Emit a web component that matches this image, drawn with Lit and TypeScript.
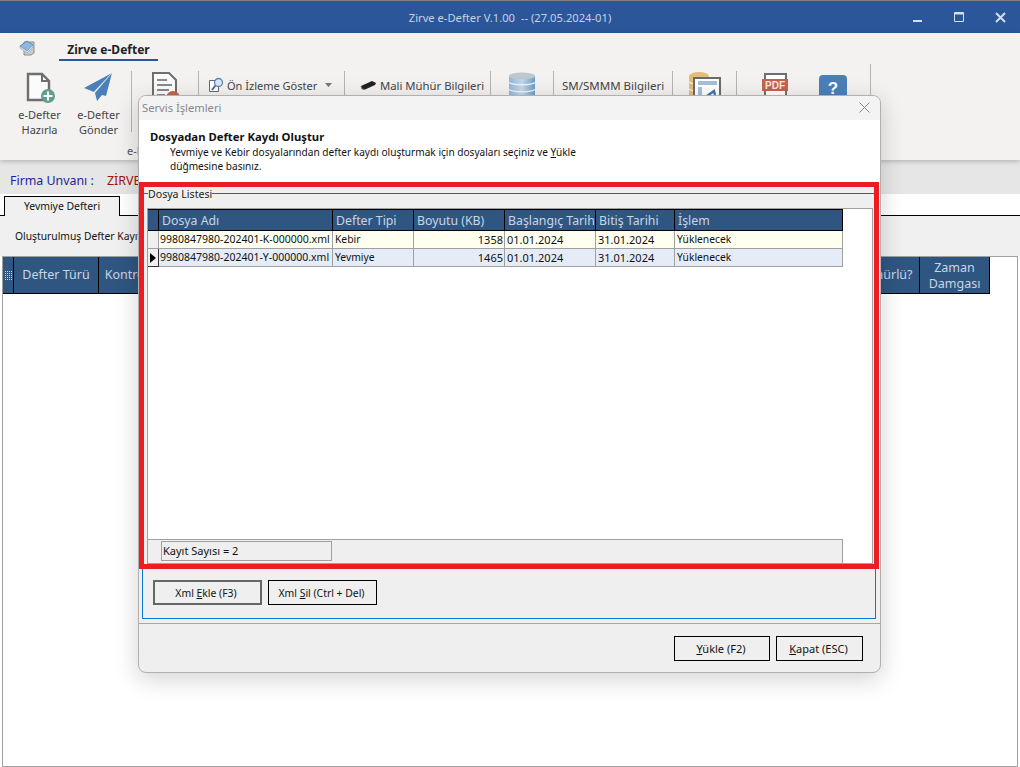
import { LitElement, html, css, svg } from "lit";
import { customElement } from "lit/decorators.js";

const iconNew = svg`<svg class="ic" width="32" height="34" viewBox="0 0 32 34"><path d="M4 3h14l7 7v19H4z" fill="#fbfbfb" stroke="#6e6e6e" stroke-width="2.4"/><path d="M18 3v7h7" fill="none" stroke="#6e6e6e" stroke-width="2"/><circle cx="24" cy="25" r="7" fill="#5f9e8e"/><path d="M24 20.500v9M19.500 25h9" stroke="#fff" stroke-width="2.2"/></svg>`;
const iconSend = svg`<svg class="ic" width="32" height="34" viewBox="0 0 32 34"><path d="M29 2 1 17l10 4z" fill="#4a80ba"/><path d="M29 2 12 22l2 8 5-6 4 1z" fill="#4a80ba"/><path d="M29 2 11 21" stroke="#f3f2f1" stroke-width=".6"/></svg>`;
const iconDocX = svg`<svg class="ic" width="32" height="34" viewBox="0 0 32 34"><path d="M4 2h16l7 7v24H4z" fill="#fbfbfb" stroke="#6e6e6e" stroke-width="2"/><path d="M8 9h10M8 14h15M8 19h12M8 24h8" stroke="#8a8a8a" stroke-width="2"/><circle cx="24" cy="27" r="7" fill="#c8614b"/></svg>`;
const iconZoom = svg`<svg width="16" height="16" viewBox="0 0 16 16"><path d="M1.500 3.500h9v11h-9z" fill="#fff" stroke="#666"/><circle cx="10.500" cy="5.500" r="4" fill="#dbe8f4" stroke="#5a86b0" stroke-width="1.3"/><path d="M7.500 8.500 4 13" stroke="#4a6f94" stroke-width="2"/></svg>`;
const iconUsb = svg`<svg width="17" height="10" viewBox="0 0 17 10"><path d="M1 6 12 1l4 2-1 2L5 9.500 2 9z" fill="#222"/><path d="M1 6 2 9l3 .5" fill="none" stroke="#777"/></svg>`;
const iconDb = svg`<svg class="ic" width="32" height="34" viewBox="0 0 32 34"><defs><linearGradient id="dbg" x1="0" x2="1" y1="0" y2="0"><stop offset="0" stop-color="#8fb6d6"/><stop offset=".5" stop-color="#c3d9ea"/><stop offset="1" stop-color="#6c9cc6"/></linearGradient></defs><path d="M3 5v21c0 2 26 2 26 0V5z" fill="url(#dbg)"/><ellipse cx="16" cy="5" rx="13" ry="3.600" fill="#bcc8d0"/><path d="M3 11.500c4 3 22 3 26 0M3 18.500c4 3 22 3 26 0" stroke="#eef4f9" stroke-width="1.400" fill="none"/><ellipse cx="16" cy="27" rx="15" ry="2.500" fill="#999" opacity=".6"/></svg>`;
const iconChart = svg`<svg class="ic" width="36" height="34" viewBox="0 0 36 34"><ellipse cx="12" cy="5" rx="10" ry="4" fill="#e4bd77"/><path d="M2 5v20c0 2 20 2 20 0V5z" fill="#e4bd77"/><path d="M2 11c3 3 17 3 20 0M2 18c3 3 17 3 20 0" stroke="#f3f2f1" stroke-width="1.400" fill="none"/><path d="M7 7h26v27H7z" fill="#fff" stroke="#6b6b6b" stroke-width="2"/><path d="M11 10h19v4H11zM11 16h4v13h-4z" fill="#a5c0db"/><path d="M20 25l7-5 1 4" stroke="#3f76b0" stroke-width="2.400" fill="none"/></svg>`;
const iconPdf = svg`<svg class="ic" width="28" height="32" viewBox="0 0 28 32"><path d="M3 1h21v30H3z" fill="#fff" stroke="#6e6e6e" stroke-width="2"/><rect x="0" y="6" width="26" height="12" fill="#c8614b"/><text x="13" y="15.500" text-anchor="middle" font-size="10" font-weight="700" fill="#f6e7e2" font-family="Liberation Sans, sans-serif">PDF</text></svg>`;
const iconHelp = svg`<svg class="ic help" width="28" height="28" viewBox="0 0 28 28"><rect width="28" height="28" rx="4" fill="#4a80ba"/><text x="14" y="19" text-anchor="middle" font-size="17" font-weight="700" fill="#fff" font-family="Liberation Sans, sans-serif">?</text></svg>`;

const COLS = [
  { label: "Dosya Adı", width: 174, kind: "file" },
  { label: "Defter Tipi", width: 81, kind: "text" },
  { label: "Boyutu (KB)", width: 91, kind: "num" },
  { label: "Başlangıç Tarihi", width: 91, kind: "date" },
  { label: "Bitiş Tarihi", width: 79, kind: "date" },
  { label: "İşlem", width: 168, kind: "text" },
];
const ROWS = [
  { cells: ["9980847980-202401-K-000000.xml", "Kebir", "1358", "01.01.2024", "31.01.2024", "Yüklenecek"], alt: false, cur: false },
  { cells: ["9980847980-202401-Y-000000.xml", "Yevmiye", "1465", "01.01.2024", "31.01.2024", "Yüklenecek"], alt: true, cur: true },
];

@customElement("app-root")
export class AppRoot extends LitElement {
  static styles = css`
    :host { display: block; width: 1020px; height: 767px; position: relative; overflow: hidden; background: #fff;
      font-family: "Noto Sans", "Open Sans", sans-serif; font-size: 11px; color: #111; }
    .page { display: flex; flex-direction: column; height: 767px; }
    .titlebar { height: 32px; flex: none; border-top: 1px solid #808080; background: #2b579a; color: #c5d2e6; font-size: 11.200px;
      display: flex; align-items: center; justify-content: center; white-space: pre; position: relative; }
    .winbtns { position: absolute; right: 0; top: 0; height: 32px; display: flex; }
    .winbtn { width: 41px; height: 32px; display: flex; align-items: center; justify-content: center; }
    .winbtn.sh { padding-left: 2px; box-sizing: border-box; }
    .ribbon { height: 127px; flex: none; background: #f3f2f1; box-shadow: 0 1px 5px rgba(0,0,0,.25); position: relative; }
    .rtabs { height: 31px; display: flex; align-items: flex-start; padding-left: 19px; }
    .logo { margin-top: 6px; }
    .rtab { margin-left: 23px; width: 99px; padding-top: 6px; box-sizing: border-box; height: 28px; border-bottom: 2px solid #2b579a; font-weight: 700; font-size: 12px; color: #222;
      display: flex; align-items: center; justify-content: center; }
    .rcells { display: flex; align-items: flex-start; height: 68px; }
    .cell { height: 61px; margin-top: 7px; border-right: 1px solid #b4b4b4; box-sizing: border-box; flex: none; display: flex; color: #444; font-size: 11.300px; }
    .cell.tall { height: 68px; margin-top: 0; padding-top: 9px; }
    .ic { flex: none; }
    .btn { display: flex; flex-direction: column; align-items: center; text-align: center; line-height: 15px; font-size: 11px; }
    .btn .ic { display: block; margin-bottom: 2px; }
    .btn span { flex: none; }
    .inline { display: flex; align-items: center; gap: 3px; height: 14px; margin-top: 7px; white-space: nowrap; }
    .c1 { width: 132px; padding-left: 10px; }
    .c1 .btn { width: 59px; }
    .c2 { width: 67px; justify-content: center; }
    .c3 { width: 146px; padding-left: 9px; }
    .c3 span { font-size: 11px; }
    .c4 { width: 146px; padding-left: 15px; }
    .c5 { width: 63px; justify-content: center; }
    .c6 { width: 119px; padding-left: 8px; }
    .c6 span { font-size: 11.500px; }
    .c7 { width: 64px; justify-content: center; }
    .c8 { width: 134px; padding-left: 25px; gap: 29px; }
    .help { margin-top: 2px; }
    .caret { margin-left: 5px; }
    .rgroup { padding-left: 127px; font-size: 11px; color: #555; margin-top: 11px; }
    .firm { height: 34px; flex: none; background: #e6e6e6; box-sizing: border-box; padding: 7px 0 0 10px; display: flex; align-items: center; font-size: 12.400px; }
    .firm .l { color: #1f1fa0; width: 97px; }
    .firm .v { color: #a01010; }
    .tabstrip { height: 22px; flex: none; display: flex; align-items: flex-end; }
    .tabstrip .gap { width: 4px; height: 1px; background: #000; }
    .tabstrip .rest { flex: 1; height: 1px; background: #000; }
    .tab { width: 116px; height: 20px; box-sizing: border-box; border: 1px solid #000; border-bottom: 0; background: #f0f0f0; text-align: center; line-height: 19px; color: #111; font-size: 10.400px; }
    .tools { height: 40px; flex: none; background: #f0f0f0; box-sizing: border-box; padding: 0 0 1px 15px; display: flex; align-items: center; color: #111; font-size: 10.300px; }
    .bgrid { flex: 1; margin: 0 2px 0 2px; border: 1px solid #a0a0a0; background: #fff; }
    .bhead { display: flex; height: 36px; background: #2f5581; color: #c9d6e6; border-bottom: 1px solid #000; width: 986px; font-size: 12.500px; border-right: 1px solid #000; }
    .bhead > div { display: flex; align-items: center; justify-content: center; text-align: center; border-right: 1px solid #000; box-sizing: border-box; line-height: 16px; flex: none; }
    .bhead > div:last-child { border-right: 0; padding-top: 1px; }
    .bhead .fill { flex: 1; }
    .w11 { width: 11px; }
    .w85 { width: 85px; }
    .w108 { width: 108px; }
    .w70 { width: 70px; }
    .w69 { width: 69px; }

    .modal { position: absolute; left: 138px; top: 95px; width: 743px; height: 578px; box-sizing: border-box; border: 1px solid #b0b0b0; border-radius: 8px;
      background: #efefef; box-shadow: 0 6px 24px rgba(0,0,0,.18); display: flex; flex-direction: column; overflow: hidden; }
    .mtitle { height: 24px; flex: none; box-sizing: border-box; padding: 0 10px 1px 3px; background: #f3f3f3; display: flex; align-items: center; justify-content: space-between; color: #888; font-size: 11.200px; }
    .mhead { height: 65px; flex: none; background: #fff; box-sizing: border-box; padding: 9px 0 0 11px; }
    .mhead h1 { margin: 0 0 1px; font-size: 11.300px; font-weight: 700; color: #111; line-height: 15px; }
    .mhead p { margin: 0 0 0 20px; width: 470px; line-height: 14px; color: #111; font-size: 10.100px; }
    .fs { height: 434px; flex: none; margin: 0 4px 0 3px; border: solid #0a78d7; border-width: 0 1px 1px; box-sizing: border-box; display: flex; flex-direction: column; }
    .legend { display: flex; align-items: center; height: 14px; margin-top: 1px; flex: none; color: #222; font-size: 10.600px; }
    .legend span { padding-top: 2px; }
    .legend i { display: block; height: 1px; background: #0a6ebd; }
    .legend .a { width: 5px; }
    .legend .b { flex: 1; }
    .panel { margin: 8px 2px 0 4px; height: 356px; flex: none; box-sizing: border-box; border: 1px solid #a0a0a0; background: #fff; display: flex; flex-direction: column; }
    .row { display: flex; flex: none; width: 695px; }
    .hd { height: 22px; background: #2f5581; color: #c9d6e6; font-size: 12.300px; }
    .hd > div { box-sizing: border-box; border-right: 1px solid #000; border-bottom: 1px solid #000; border-top: 1px solid #000; padding-left: 3px; line-height: 21px; white-space: nowrap; overflow: hidden; }
    .sel { width: 11px; flex: none; box-sizing: border-box; }
    .hd .sel { padding: 0; }
    .dt { height: 18px; background: #fffff0; }
    .dt.alt { background: #e6ecf7; }
    .dt > div { box-sizing: border-box; border-right: 1px solid #a0a0a0; border-bottom: 1px solid #a0a0a0; padding: 0 1px 0 2px; line-height: 17px; white-space: nowrap; overflow: hidden; color: #111; }
    .dt .sel { background: #efefef; padding: 0; display: flex; align-items: center; justify-content: center; }
    .dt .sel.cur { border-color: #333; }
    .dt .k-file { font-size: 10.500px; padding-left: 1px; }
    .k-text { font-size: 10.300px; }
    .k-num { text-align: right; }
    .spacer { flex: 1; }
    .pfoot { height: 24px; width: 695px; flex: none; box-sizing: border-box; background: #efefef; border-top: 1px solid #a0a0a0; border-right: 1px solid #a0a0a0; padding: 1px 0 0 13px; }
    .count { width: 171px; height: 20px; box-sizing: border-box; border: 1px solid #a0a0a0; line-height: 18px; padding-left: 1px; }
    .fsbtns { display: flex; gap: 6px; padding: 16px 0 0 10px; }
    button { font: inherit; color: #111; background: #efefef; border: 1px solid #000; height: 25px; padding: 0; box-sizing: border-box; }
    .b1 { width: 109px; border: 2px solid #666; font-size: 10.400px; padding-right: 3px; }
    .b2 { width: 109px; font-size: 10.400px; padding-right: 2px; }
    .mfoot { flex: 1; margin-top: 4px; border-top: 1px solid #a8a8a8; display: flex; justify-content: flex-end; gap: 6px; padding: 12px 17px 0 0; }
    .b3 { width: 96px; padding-right: 2px; }
    .b4 { width: 87px; padding-right: 2px; }
    .red { position: absolute; left: 139px; top: 182px; width: 740px; height: 387px; box-sizing: border-box; border: 5px solid #ec1c24; pointer-events: none; }
  `;

  render() {
    return html`
      <div class="page">
        <div class="titlebar"><span>Zirve e-Defter V.1.00  -- (27.05.2024-01)</span><div class="winbtns"><div class="winbtn"><svg width="10" height="10" viewBox="0 0 10 10"><path d="M0 9h9" stroke="#d5deeb" stroke-width="2"/></svg></div><div class="winbtn sh"><svg width="11" height="11" viewBox="0 0 11 11"><path d="M.5.5h9v9h-9z" fill="none" stroke="#d5deeb"/><path d="M0 1.500h10" stroke="#d5deeb" stroke-width="2"/></svg></div><div class="winbtn sh"><svg width="11" height="11" viewBox="0 0 11 11"><path d="M1 1l9 9M10 1l-9 9" stroke="#d5deeb" stroke-width="2"/></svg></div></div></div>
        <div class="ribbon">
          <div class="rtabs">
            <svg class="logo" width="17" height="17" viewBox="0 0 17 17"><path d="M5 3h10v11l-3 2H5z" fill="#c9c9c9" stroke="#8d8d8d"/><path d="M1 7l7-5 6 4-6 6z" fill="#8fb7dc" stroke="#5b88b4"/><path d="M1 7v2l7 5 6-6V6L8 12z" fill="#d8e4f0" stroke="#7e9cba" stroke-width=".6"/></svg>
            <div class="rtab">Zirve e-Defter</div>
          </div>
          <div class="rcells">
            <div class="cell c1">
              <div class="btn">${iconNew}<span>e-Defter<br />Hazırla</span></div>
              <div class="btn">${iconSend}<span>e-Defter<br />Gönder</span></div>
            </div>
            <div class="cell c2">${iconDocX}</div>
            <div class="cell c3"><div class="inline">${iconZoom}<span>Ön İzleme Göster</span><svg class="caret" width="7" height="4" viewBox="0 0 7 4"><path d="M0 0h7L3.500 4z" fill="#777"/></svg></div></div>
            <div class="cell c4"><div class="inline">${iconUsb}<span>Mali Mühür Bilgileri</span></div></div>
            <div class="cell c5">${iconDb}</div>
            <div class="cell c6"><div class="inline"><span>SM/SMMM Bilgileri</span></div></div>
            <div class="cell c7">${iconChart}</div>
            <div class="cell c8 tall">${iconPdf}${iconHelp}</div>
          </div>
          <div class="rgroup">e-Defter İşlemleri</div>
        </div>
        <div class="firm"><span class="l">Firma Unvanı :</span><span class="v">ZİRVE</span></div>
        <div class="tabstrip"><div class="gap"></div><div class="tab">Yevmiye Defteri</div><div class="rest"></div></div>
        <div class="tools">Oluşturulmuş Defter Kayıtları</div>
        <div class="bgrid">
          <div class="bhead">
            <div class="w11"><svg width="7" height="9" viewBox="0 0 7 9"><path d="M0 .5h7M0 2.500h7M0 4.500h7M0 6.500h7M0 8.500h7" stroke="#c9d6e6" stroke-dasharray="1 1"/></svg></div>
            <div class="w85">Defter Türü</div>
            <div class="w108">Kontrol Durumu</div>
            <div class="fill"></div>
            <div class="w70">Mühürlü?</div>
            <div class="w69">Zaman<br />Damgası</div>
          </div>
        </div>
      </div>

      <div class="modal">
        <div class="mtitle"><span>Servis İşlemleri</span>
          <svg width="11" height="11" viewBox="0 0 11 11"><path d="M.5.5l10 10M10.500.5l-10 10" stroke="#8a8a8a"/></svg></div>
        <div class="mhead">
          <h1>Dosyadan Defter Kaydı Oluştur</h1>
          <p>Yevmiye ve Kebir dosyalarından defter kaydı oluşturmak için dosyaları seçiniz ve <u>Y</u>ükle<br />düğmesine basınız.</p>
        </div>
        <div class="fs">
          <div class="legend"><i class="a"></i><span>Dosya Listesi</span><i class="b"></i></div>
          <div class="panel">
            <div class="row hd">
              <div class="sel"></div>
              ${COLS.map((c) => html`<div style="width:${c.width}px">${c.label}</div>`)}
            </div>
            ${ROWS.map((r) => html`<div class="row dt ${r.alt ? "alt" : ""}">
              <div class="sel ${r.cur ? "cur" : ""}">${r.cur ? html`<svg width="6" height="10" viewBox="0 0 6 10"><path d="M0 0l6 5-6 5z" fill="#000"/></svg>` : ""}</div>
              ${r.cells.map((t, i) => html`<div class="k-${COLS[i].kind}" style="width:${COLS[i].width}px">${t}</div>`)}
            </div>`)}
            <div class="spacer"></div>
            <div class="pfoot"><div class="count">Kayıt Sayısı = 2</div></div>
          </div>
          <div class="fsbtns">
            <button class="b1">Xml <u>E</u>kle (F3)</button>
            <button class="b2">Xml <u>S</u>il (Ctrl + Del)</button>
          </div>
        </div>
        <div class="mfoot">
          <button class="b3"><u>Y</u>ükle (F2)</button>
          <button class="b4"><u>K</u>apat (ESC)</button>
        </div>
      </div>
      <div class="red"></div>
    `;
  }
}
